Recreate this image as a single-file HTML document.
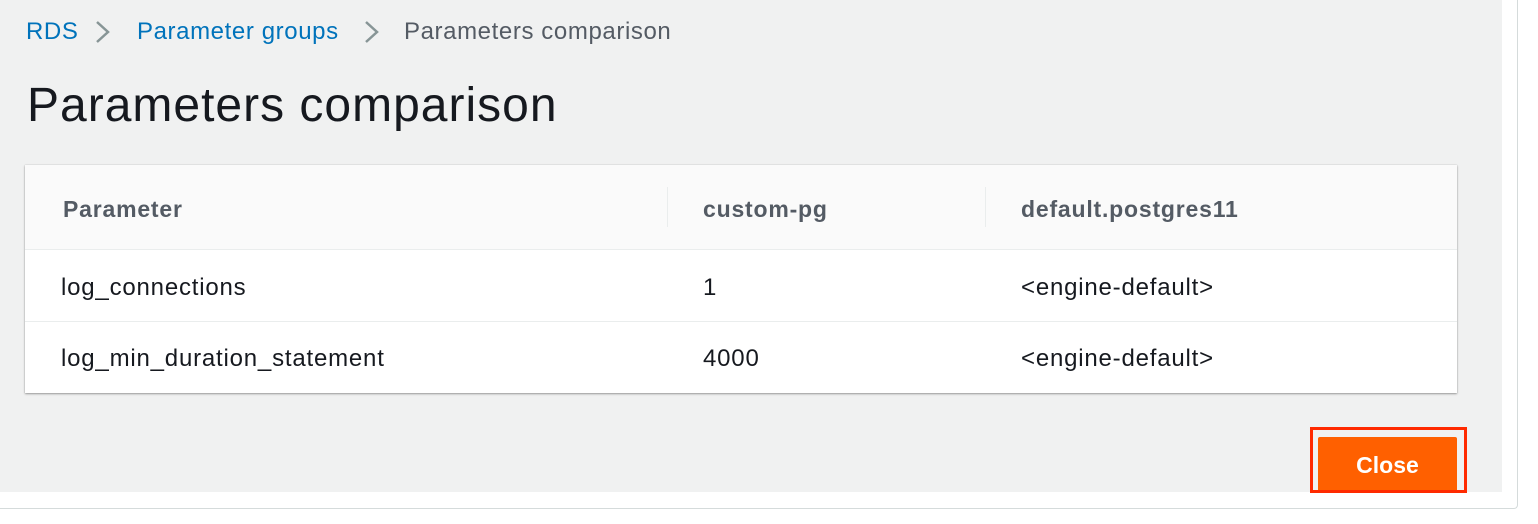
<!DOCTYPE html>
<html><head><style>
body{margin:0;width:1538px;height:524px;background:#fff;font-family:"Liberation Sans",sans-serif;position:relative;overflow:hidden}
.outer{position:absolute;left:0;top:0;width:1517px;height:508px;border-right:1px solid #d5dbdb;border-bottom:1px solid #d5dbdb;border-bottom-right-radius:4px;background:#fff}
.gray{position:absolute;left:0;top:0;width:1502px;height:492px;background:#f0f1f1}
.bc{position:absolute;top:18px;font-size:24px;letter-spacing:0.6px;color:#0073bb}
h1{position:absolute;left:27px;top:78px;margin:0;font-size:48px;letter-spacing:1px;font-weight:normal;color:#16191f}
.table{position:absolute;left:25px;top:165px;width:1432px;height:228px;background:#fff;box-shadow:0 1px 2px rgba(0,0,0,.35),0 0 1px rgba(0,0,0,.2)}
.hdr{position:absolute;left:0;top:0;width:100%;height:84px;background:#fafafa;border-bottom:1px solid #eaeded}
.c{position:absolute;font-size:24px;letter-spacing:0.8px;color:#16191f}
.h{font-weight:bold;color:#545b64;top:31px;font-size:23px}
.vl{position:absolute;top:22px;width:1px;height:40px;background:#eaeded}
.row2{position:absolute;left:0;top:156px;width:100%;height:1px;background:#eaeded}
.red{position:absolute;left:1310px;top:427px;width:151px;height:60px;border:3px solid #ff2a00}
.btn{position:absolute;left:1318px;top:437px;width:139px;height:55px;background:#ff6000;border-radius:2px 2px 0 0;color:#fff;font-weight:bold;font-size:23px;text-align:center;line-height:56px}
</style></head><body>
<div class="outer"></div>
<div class="gray"></div>
<div class="bc" style="left:26px">RDS</div>
<svg style="position:absolute;left:94px;top:20px" width="18" height="24"><path d="M3 2 L14 12 L3 22" fill="none" stroke="#879596" stroke-width="2.5"/></svg>
<div class="bc" style="left:137px">Parameter groups</div>
<svg style="position:absolute;left:363px;top:20px" width="18" height="24"><path d="M3 2 L14 12 L3 22" fill="none" stroke="#879596" stroke-width="2.5"/></svg>
<div class="bc" style="left:404px;color:#545b64">Parameters comparison</div>
<h1>Parameters comparison</h1>
<div class="table">
<div class="hdr"></div>
<div class="vl" style="left:642px"></div><div class="vl" style="left:960px"></div>
<div class="c h" style="left:38px">Parameter</div>
<div class="c h" style="left:678px">custom-pg</div>
<div class="c h" style="left:996px">default.postgres11</div>
<div class="c" style="left:36px;top:109px">log_connections</div>
<div class="c" style="left:678px;top:109px">1</div>
<div class="c" style="left:996px;top:109px">&lt;engine-default&gt;</div>
<div class="row2"></div>
<div class="c" style="left:36px;top:180px">log_min_duration_statement</div>
<div class="c" style="left:678px;top:180px">4000</div>
<div class="c" style="left:996px;top:180px">&lt;engine-default&gt;</div>
</div>
<div class="btn">Close</div>
<div class="red"></div>
</body></html>
